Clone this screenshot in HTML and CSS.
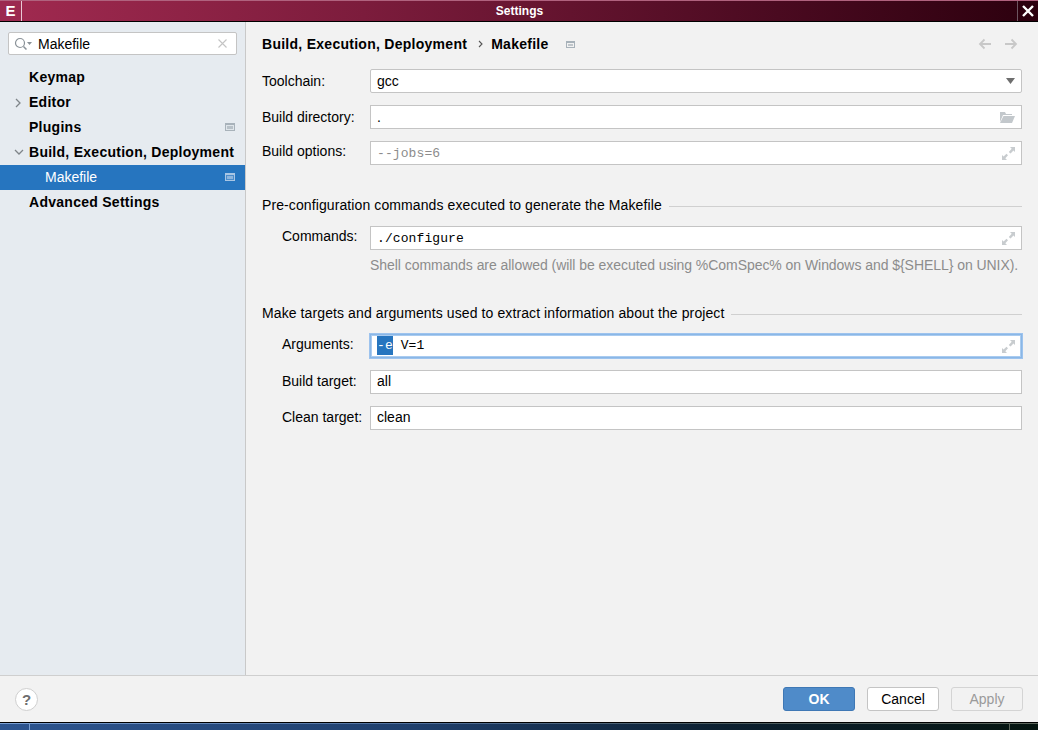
FILE: index.html
```html
<!DOCTYPE html>
<html lang="en">
<head>
  <meta charset="UTF-8" />
  <title>Settings</title>
  <link rel="stylesheet" href="styles.css">
</head>
<body>
  <div class="titlebar">
    <div class="title-app">E</div>
    <div class="title-text">Settings</div>
    <div class="title-close">
      <svg width="14" height="14" viewBox="0 0 14 14"><path d="M2 2L12 12M12 2L2 12" stroke="#fff" stroke-width="2.4" fill="none"/></svg>
    </div>
  </div>

  <div class="content">
    <div class="sidebar">
      <div class="search">
        <svg class="search-icon" width="18" height="14" viewBox="0 0 18 14"><circle cx="6" cy="6" r="4.5" fill="none" stroke="#8a9298" stroke-width="1.2"/><path d="M9.5 9.5L12.5 12.5" stroke="#8a9298" stroke-width="1.5"/><path d="M13 5h5l-2.500 3z" fill="#8a9298"/></svg>
        <span class="search-text">Makefile</span>
        <svg class="search-clear" width="9" height="9" viewBox="0 0 9 9"><path d="M.5 .5L8.500 8.500M8.500 .5L.5 8.500" stroke="#c4c4c4" stroke-width="1.1"/></svg>
      </div>
      <div class="tree">
        <div class="tree-row"><span class="tree-label">Keymap</span></div>
        <div class="tree-row">
          <svg class="arrow" width="8" height="10" viewBox="0 0 8 10"><path d="M2 1L6 5L2 9" fill="none" stroke="#7f8589" stroke-width="1.3"/></svg>
          <span class="tree-label">Editor</span>
        </div>
        <div class="tree-row">
          <span class="tree-label">Plugins</span>
          <svg class="page-icon" width="10" height="8" viewBox="0 0 10 8"><rect width="10" height="8" fill="#a8b2ba"/><rect x="1" y="2" width="8" height="5" fill="#dfe5ea"/><rect x="2" y="3" width="6" height="3" fill="#b8c1c8"/></svg>
        </div>
        <div class="tree-row">
          <svg class="arrow" width="10" height="8" viewBox="0 0 10 8"><path d="M1 2L5 6L9 2" fill="none" stroke="#7f8589" stroke-width="1.3"/></svg>
          <span class="tree-label">Build, Execution, Deployment</span>
        </div>
        <div class="tree-row selected">
          <span class="tree-label sub">Makefile</span>
          <svg class="page-icon" width="10" height="8" viewBox="0 0 10 8"><rect width="10" height="8" fill="#a9c6e4"/><rect x="1" y="2" width="8" height="5" fill="#4d8dcb"/><rect x="2" y="3" width="6" height="3" fill="#8db5dd"/></svg>
        </div>
        <div class="tree-row"><span class="tree-label">Advanced Settings</span></div>
      </div>
    </div>

    <div class="main">
      <div class="crumbs">
        <b>Build, Execution, Deployment</b>
        <svg class="crumb-sep" width="5" height="8" viewBox="0 0 5 8"><path d="M1 1L4 4L1 7" fill="none" stroke="#555" stroke-width="1.1"/></svg>
        <b>Makefile</b>
        <svg class="crumb-icon" width="9" height="7" viewBox="0 0 9 7"><rect width="9" height="7" fill="#a8b2ba"/><rect x="1" y="2" width="7" height="4" fill="#f2f2f2"/><rect x="2" y="3" width="5" height="2" fill="#c0c6cb"/></svg>
        <span class="crumb-nav">
          <svg width="14" height="12" viewBox="0 0 14 12"><path d="M13 6H2M6.500 1.500L2 6L6.500 10.500" fill="none" stroke="#c8c8c8" stroke-width="1.800"/></svg>
          <svg width="14" height="12" viewBox="0 0 14 12"><path d="M1 6H12M7.500 1.500L12 6L7.500 10.500" fill="none" stroke="#c8c8c8" stroke-width="1.800"/></svg>
        </span>
      </div>

      <div class="rows">
        <div class="row">
          <label class="lbl">Toolchain:</label>
          <div class="field combo">
            <span>gcc</span>
            <svg class="field-icon" width="9" height="6" viewBox="0 0 9 6"><path d="M0 0h9L4.500 6z" fill="#6e6e6e"/></svg>
          </div>
        </div>
        <div class="row">
          <label class="lbl">Build directory:</label>
          <div class="field">
            <span>.</span>
            <svg class="field-icon" width="15" height="11" viewBox="0 0 15 11"><path d="M0 0h5l1 2h6v1H3L0 10z" fill="#c3c8cc"/><path d="M3.500 4H15l-3 7H0z" fill="#c3c8cc"/></svg>
          </div>
        </div>
        <div class="row">
          <label class="lbl raised">Build options:</label>
          <div class="field mono dim">
            <span>--jobs=6</span>
            <svg class="field-icon" width="13" height="13" viewBox="0 0 13 13"><path d="M8 0h5v5L11.500 3.500L8.500 6.500L6.800 5L9.700 1.800zM0 13V8l1.600 1.600L4.500 6.800L6 8.300L3.300 11.300L5 13z" fill="#c8cccf"/></svg>
          </div>
        </div>
      </div>

      <div class="section first">
        <span>Pre-configuration commands executed to generate the Makefile</span>
        <div class="section-line"></div>
      </div>
      <div class="row indent">
        <label class="lbl raised">Commands:</label>
        <div class="field mono">
          <span>./configure</span>
          <svg class="field-icon" width="13" height="13" viewBox="0 0 13 13"><path d="M8 0h5v5L11.500 3.500L8.500 6.500L6.800 5L9.700 1.800zM0 13V8l1.600 1.600L4.500 6.800L6 8.300L3.300 11.300L5 13z" fill="#c8cccf"/></svg>
        </div>
      </div>
      <div class="hint">Shell commands are allowed (will be executed using %ComSpec% on Windows and ${SHELL} on UNIX).</div>

      <div class="section second">
        <span>Make targets and arguments used to extract information about the project</span>
        <div class="section-line"></div>
      </div>
      <div class="rows tight">
        <div class="row indent">
          <label class="lbl raised">Arguments:</label>
          <div class="field mono focused high">
            <span><span class="sel">-e</span> V=1</span>
            <svg class="field-icon" width="13" height="13" viewBox="0 0 13 13"><path d="M8 0h5v5L11.500 3.500L8.500 6.500L6.800 5L9.700 1.800zM0 13V8l1.600 1.600L4.500 6.800L6 8.300L3.300 11.300L5 13z" fill="#c8cccf"/></svg>
          </div>
        </div>
        <div class="row indent">
          <label class="lbl nudged">Build target:</label>
          <div class="field high"><span>all</span></div>
        </div>
        <div class="row indent">
          <label class="lbl nudged">Clean target:</label>
          <div class="field high"><span>clean</span></div>
        </div>
      </div>
    </div>
  </div>

  <div class="footer">
    <div class="help">?</div>
    <div class="buttons">
      <div class="btn ok">OK</div>
      <div class="btn">Cancel</div>
      <div class="btn disabled">Apply</div>
    </div>
  </div>

  <div class="taskbar">
    <div class="task-line"></div>
    <div class="task-slots">
      <div class="task-slot first"></div>
      <div class="task-slot last"></div>
    </div>
  </div>
</body>
</html>
```

FILE: styles.css
```css
html, body {
  margin: 0;
  padding: 0;
}

body {
  width: 1038px;
  height: 730px;
  overflow: hidden;
  display: flex;
  flex-direction: column;
  background-color: #f2f2f2;
  color: #000;
  font-family: "Liberation Sans", Arial, sans-serif;
  font-size: 14px;
}

/* window title */
.titlebar {
  height: 22px;
  box-sizing: border-box;
  display: flex;
  align-items: stretch;
  border-top: 1px solid #b0627e;
  border-bottom: 1px solid #000;
  background: linear-gradient(to right, #a12a50, #7c1c3c 35%, #4a0a20 75%, #2c000e);
}

.title-app {
  width: 22px;
  box-sizing: border-box;
  border-right: 1px solid #e9c9d4;
  background-color: #9c2a50;
  color: #fff;
  font-weight: bold;
  font-size: 15px;
  line-height: 20px;
  text-align: center;
}

.title-text {
  flex: 1;
  text-align: center;
  color: #fff;
  font-weight: bold;
  font-size: 12px;
  line-height: 20px;
}

.title-close {
  width: 21px;
  box-sizing: border-box;
  border-left: 1px solid #6d5560;
  display: flex;
  align-items: center;
  justify-content: center;
  background-color: #2c000e;
}

.content {
  flex: 1;
  display: flex;
  min-height: 0;
}

/* left side */
.sidebar {
  width: 246px;
  box-sizing: border-box;
  flex-shrink: 0;
  background-color: #e6ebf0;
  border-right: 1px solid #c9c9c9;
  padding-top: 10px;
}

.search {
  margin: 0 8px;
  width: 229px;
  height: 23px;
  box-sizing: border-box;
  display: flex;
  align-items: center;
  background-color: #fff;
  border: 1px solid #c4c4c4;
  border-radius: 2px;
  padding: 0 9px 0 5px;
}

.search-icon {
  margin-right: 6px;
}

.search-text {
  flex: 1;
  font-size: 14px;
}

.tree {
  margin-top: 10px;
}

.tree-row {
  height: 25px;
  display: flex;
  align-items: center;
  position: relative;
  padding: 0 10px 0 29px;
}

.tree-label {
  flex: 1;
  font-weight: bold;
  font-size: 14px;
  letter-spacing: 0.27px;
  white-space: nowrap;
  margin-bottom: 1px;
}

.tree-label.sub {
  font-weight: normal;
  padding-left: 16px;
  letter-spacing: 0;
  color: #fff;
}

.arrow {
  position: absolute;
  left: 14px;
  top: 8px;
}

.page-icon {
  margin-bottom: 1px;
}

.selected {
  background-color: #2675bf;
}

/* right side */
.main {
  flex: 1;
  min-width: 0;
  padding: 0 16px 0 16px;
}

.crumbs {
  height: 22px;
  margin-top: 11px;
  display: flex;
  align-items: center;
  font-size: 14px;
  letter-spacing: 0.27px;
}

.crumb-sep {
  margin: 0 8px 0 11px;
}

.crumb-icon {
  margin-left: 17px;
}

.crumb-nav {
  margin-left: auto;
  padding-right: 4px;
  display: flex;
  gap: 12px;
}

.rows {
  margin-top: 14px;
  display: flex;
  flex-direction: column;
  gap: 12px;
}

.row {
  display: flex;
  align-items: center;
}

.lbl {
  width: 108px;
  flex-shrink: 0;
  font-size: 14px;
}

.lbl.raised {
  margin-bottom: 5px;
}

.lbl.nudged {
  margin-bottom: 2px;
}

.indent .lbl {
  width: 88px;
  margin-left: 20px;
}

.field {
  flex: 1;
  height: 24px;
  box-sizing: border-box;
  display: flex;
  align-items: center;
  justify-content: space-between;
  background-color: #fff;
  border: 1px solid #c4c4c4;
  padding: 0 6px;
  font-size: 14px;
}

.combo {
  border-radius: 2px;
}

.mono {
  font-family: "Liberation Mono", "Courier New", monospace;
  font-size: 13px;
  letter-spacing: 0.1px;
}

.dim {
  color: #8c8c8c;
}

.field.high > span {
  margin-bottom: 2px;
}

.focused {
  border: 1px solid #8ab7e6;
  box-shadow: 0 0 0 1px #9dc3ee, inset 0 0 0 1px #a9cbf0;
}

.sel {
  background-color: #2675bf;
  color: #fff;
  padding: 2px 0;
}

.section {
  display: flex;
  align-items: center;
  gap: 7px;
  font-size: 14px;
  letter-spacing: 0.1px;
  height: 16px;
}

.section.first {
  margin-top: 32px;
}

.section.second {
  margin-top: 32px;
}

.section-line {
  flex: 1;
  height: 1px;
  margin-top: 2px;
  background-color: #d0d0d0;
}

.section + .row {
  margin-top: 13px;
}

.hint {
  margin: 7px 0 0 108px;
  color: #8c8c8c;
  font-size: 14px;
  letter-spacing: -0.05px;
  white-space: nowrap;
}

.rows.tight {
  margin-top: 13px;
}

/* bottom buttons */
.footer {
  height: 47px;
  box-sizing: border-box;
  flex-shrink: 0;
  display: flex;
  align-items: center;
  justify-content: space-between;
  border-top: 1px solid #cfcfcf;
  padding: 0 15px;
}

.help {
  width: 23px;
  height: 23px;
  box-sizing: border-box;
  border: 1px solid #cfcfcf;
  border-radius: 50%;
  background-color: #fff;
  color: #6e6e6e;
  font-weight: bold;
  font-size: 15px;
  line-height: 21px;
  text-align: center;
}

.buttons {
  display: flex;
  gap: 12px;
}

.btn {
  width: 72px;
  height: 24px;
  box-sizing: border-box;
  background-color: #fff;
  border: 1px solid #c4c4c4;
  border-radius: 3px;
  font-size: 14px;
  line-height: 22px;
  text-align: center;
}

.btn.ok {
  background-color: #4f8bc9;
  border-color: #3f78b5;
  color: #fff;
  font-weight: bold;
}

.btn.disabled {
  background-color: #f2f2f2;
  border-color: #d4d4d4;
  color: #9a9a9a;
}

/* desktop panel below the dialog */
.taskbar {
  height: 8px;
  box-sizing: border-box;
  flex-shrink: 0;
  display: flex;
  flex-direction: column;
  border-top: 1px solid #000;
  background: linear-gradient(to right, #2d5590, #1f3f6c 40%, #0c2030 70%, #051510);
}

.task-line {
  height: 1px;
  background: linear-gradient(to right, #7aa0d4, #4e6f9c 40%, #48585c 70%, #5c665c);
}

.task-slots {
  flex: 1;
  display: flex;
  justify-content: space-between;
}

.task-slot.first {
  width: 30px;
  border-right: 1px solid #7aa0d4;
  box-sizing: border-box;
}

.task-slot.last {
  width: 29px;
  border-left: 1px solid #5c665c;
  box-sizing: border-box;
}
```
